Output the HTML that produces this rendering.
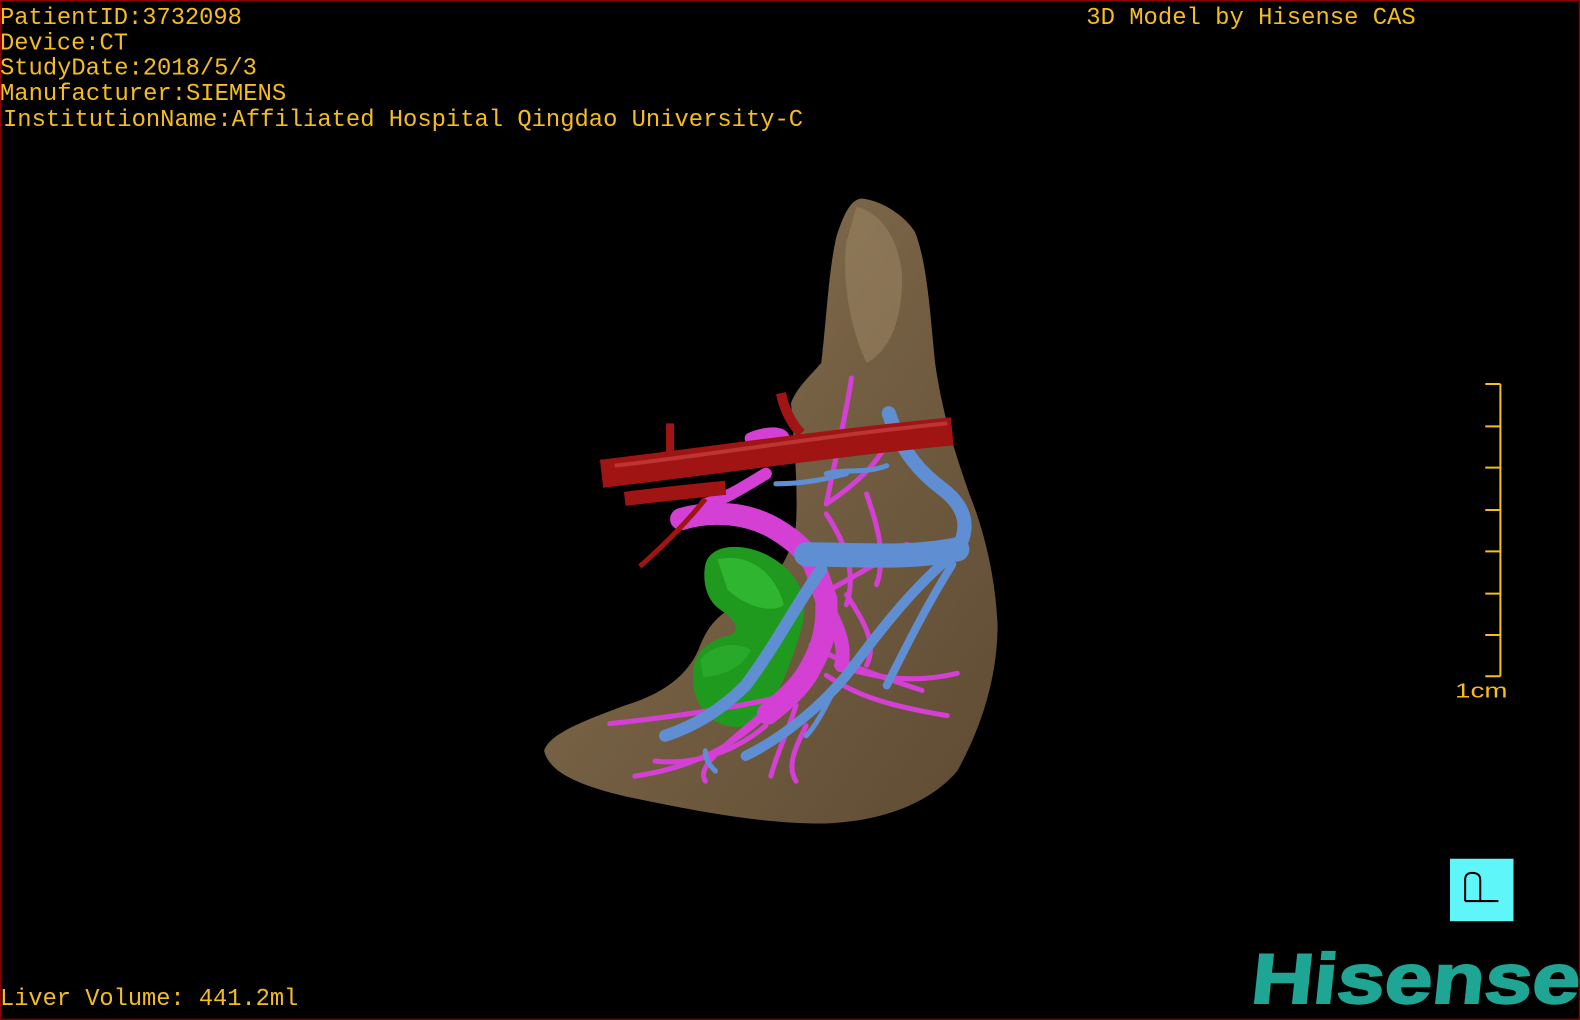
<!DOCTYPE html>
<html><head><meta charset="utf-8"><style>
html,body{margin:0;padding:0;background:#000;width:1580px;height:1020px;overflow:hidden}
svg{display:block}
.t{font-family:"Liberation Mono",monospace;fill:#f5bd1f;font-size:24px}
</style></head><body>
<svg width="1580" height="1020" viewBox="0 0 1568 1012" preserveAspectRatio="none" xmlns="http://www.w3.org/2000/svg">
<defs>
<linearGradient id="lv" x1="0" y1="0" x2="1" y2="1">
<stop offset="0" stop-color="#8d7656"/><stop offset="0.5" stop-color="#735e42"/><stop offset="1" stop-color="#5e4b33"/>
</linearGradient>
</defs>
<rect x="0.5" y="0.5" width="1567" height="1011" fill="#000" stroke="#8a0000" stroke-width="1.5"/>
<text class="t" x="0" y="24" textLength="240" lengthAdjust="spacingAndGlyphs">PatientID:3732098</text>
<text class="t" x="0" y="49" textLength="127" lengthAdjust="spacingAndGlyphs">Device:CT</text>
<text class="t" x="0" y="74" textLength="255" lengthAdjust="spacingAndGlyphs">StudyDate:2018/5/3</text>
<text class="t" x="0" y="99" textLength="284" lengthAdjust="spacingAndGlyphs">Manufacturer:SIEMENS</text>
<text class="t" x="3" y="125" textLength="794" lengthAdjust="spacingAndGlyphs">InstitutionName:Affiliated Hospital Qingdao University-C</text>
<text class="t" x="1078" y="24" textLength="327" lengthAdjust="spacingAndGlyphs">3D Model by Hisense CAS</text>
<text class="t" x="0" y="997" textLength="296" lengthAdjust="spacingAndGlyphs">Liver Volume: 441.2ml</text>
<!-- liver -->
<path fill="url(#lv)" d="M855,197 C870,198 895,210 908,230 C920,260 923,310 928,360 C935,410 948,450 962,490 C978,530 988,575 990,620 C990,670 975,720 950,765 C920,800 870,815 820,817 C760,818 690,805 620,790 C570,778 545,765 540,745 C545,728 580,715 620,700 C660,688 685,668 695,640 C705,615 720,605 735,600 C760,585 785,560 790,520 C792,480 788,440 785,400 C790,385 805,372 815,360 C820,320 822,270 830,235 C838,210 845,198 855,197 Z"/>
<path fill="#9d8766" opacity="0.5" d="M850,205 C870,210 890,230 895,270 C897,320 880,350 860,360 C845,330 835,280 840,240 Z"/>
<!-- green gallbladder -->
<path fill="#1f9a1f" d="M700,560 C705,540 735,538 760,550 C790,565 805,590 795,625 C788,650 778,675 770,690 C760,715 745,725 720,720 C695,712 686,690 688,665 C690,645 705,635 725,630 C735,625 730,615 715,605 C700,595 697,575 700,560 Z"/>
<path fill="#3ccc3c" opacity="0.55" d="M712,555 C740,548 768,565 778,600 C765,610 738,600 722,585 Z"/>
<path fill="#34b834" opacity="0.5" d="M695,655 C705,640 730,635 745,645 C735,665 715,670 698,672 Z"/>
<!-- magenta portal -->
<g stroke="#d43fd4" fill="none" stroke-linecap="round">
<path stroke-width="22" d="M676,515 C710,505 745,510 770,525 C790,537 800,548 808,560 L820,595 C822,630 812,650 800,670 C790,685 775,698 762,708"/>
<path stroke-width="12" d="M745,435 C770,425 790,430 770,450 M760,470 C735,485 720,495 700,500"/>
<path stroke-width="14" d="M820,600 C830,620 840,640 835,660"/>
<g stroke-width="5">
<path d="M845,375 C840,410 830,450 820,500"/>
<path d="M820,500 C850,480 870,460 880,440"/>
<path d="M815,590 C850,570 870,560 900,540"/>
<path d="M805,640 C840,660 870,670 915,685"/>
<path d="M780,690 C740,700 680,710 605,718"/>
<path d="M770,700 C740,730 700,760 630,770"/>
<path d="M790,700 C780,730 770,750 765,770"/>
<path d="M820,670 C850,690 880,700 940,710"/>
<path d="M830,660 C860,670 900,680 950,668"/>
<path d="M760,705 C720,740 690,760 700,775"/>
<path d="M840,590 C860,620 870,640 860,660"/>
<path d="M820,510 C840,540 850,570 840,600"/>
<path d="M760,720 C730,745 690,760 650,755"/>
<path d="M860,490 C870,520 880,550 870,580"/>
<path d="M800,720 C790,740 780,760 790,775"/>
</g>
</g>
<!-- blue hepatic veins -->
<g stroke="#5f8fd2" fill="none" stroke-linecap="round">
<path stroke-width="24" d="M800,550 C850,550 900,555 950,545"/>
<path stroke-width="14" d="M950,545 C965,520 955,500 935,485 C915,470 895,450 882,410"/>
<path stroke-width="12" d="M815,565 C790,600 770,640 740,680 C715,705 690,720 660,730"/>
<path stroke-width="10" d="M940,555 C900,590 870,630 840,670 C815,700 780,730 740,750"/>
<path stroke-width="8" d="M945,560 C920,600 900,640 880,680"/>
<path stroke-width="5" d="M820,470 C840,465 860,470 880,462"/>
<path stroke-width="5" d="M770,480 C800,480 820,475 840,470"/>
<path stroke-width="5" d="M700,745 C700,755 705,760 710,765"/>
<path stroke-width="5" d="M830,680 C820,700 810,720 800,730"/>
</g>
<!-- red artery -->
<g stroke="#a01414" fill="none" stroke-linecap="butt">
<path stroke-width="28" d="M597,470 C700,458 820,440 945,428"/>
<path stroke-width="14" d="M620,495 C660,490 690,487 720,484"/>
<path stroke-width="8" d="M665,420 L665,460"/>
<path stroke-width="5" d="M700,495 C680,520 660,540 635,562"/>
<path stroke-width="10" d="M775,390 C778,405 785,420 795,430"/>
</g>
<path stroke="#d04a4a" stroke-width="4" fill="none" opacity="0.6" d="M610,462 C700,452 820,432 940,420"/>
<!-- scale bar -->
<g stroke="#f5bd1f" stroke-width="2" fill="none">
<path d="M1489,381 V671"/>
<path d="M1474,381 H1489 M1474,423 H1489 M1474,464 H1489 M1474,506 H1489 M1474,547 H1489 M1474,589 H1489 M1474,630 H1489 M1474,671 H1489"/>
</g>
<text x="1444" y="692" font-family="Liberation Sans,sans-serif" font-size="20" fill="#f5bd1f" textLength="52" lengthAdjust="spacingAndGlyphs">1cm</text>
<rect x="1439" y="852" width="63" height="62" fill="#5ff6fa"/>
<path d="M1454,894 V873 Q1454,866 1461,866 Q1469,866 1469,873 V894 M1454,894 H1487" stroke="#000" stroke-width="2" fill="none"/>
<text x="0" y="0" transform="translate(1240,995) skewX(-6)" font-family="Liberation Sans,sans-serif" font-weight="bold" font-size="70" fill="#1fa594" stroke="#1fa594" stroke-width="2" textLength="326" lengthAdjust="spacingAndGlyphs">Hisense</text>
</svg>
</body></html>
